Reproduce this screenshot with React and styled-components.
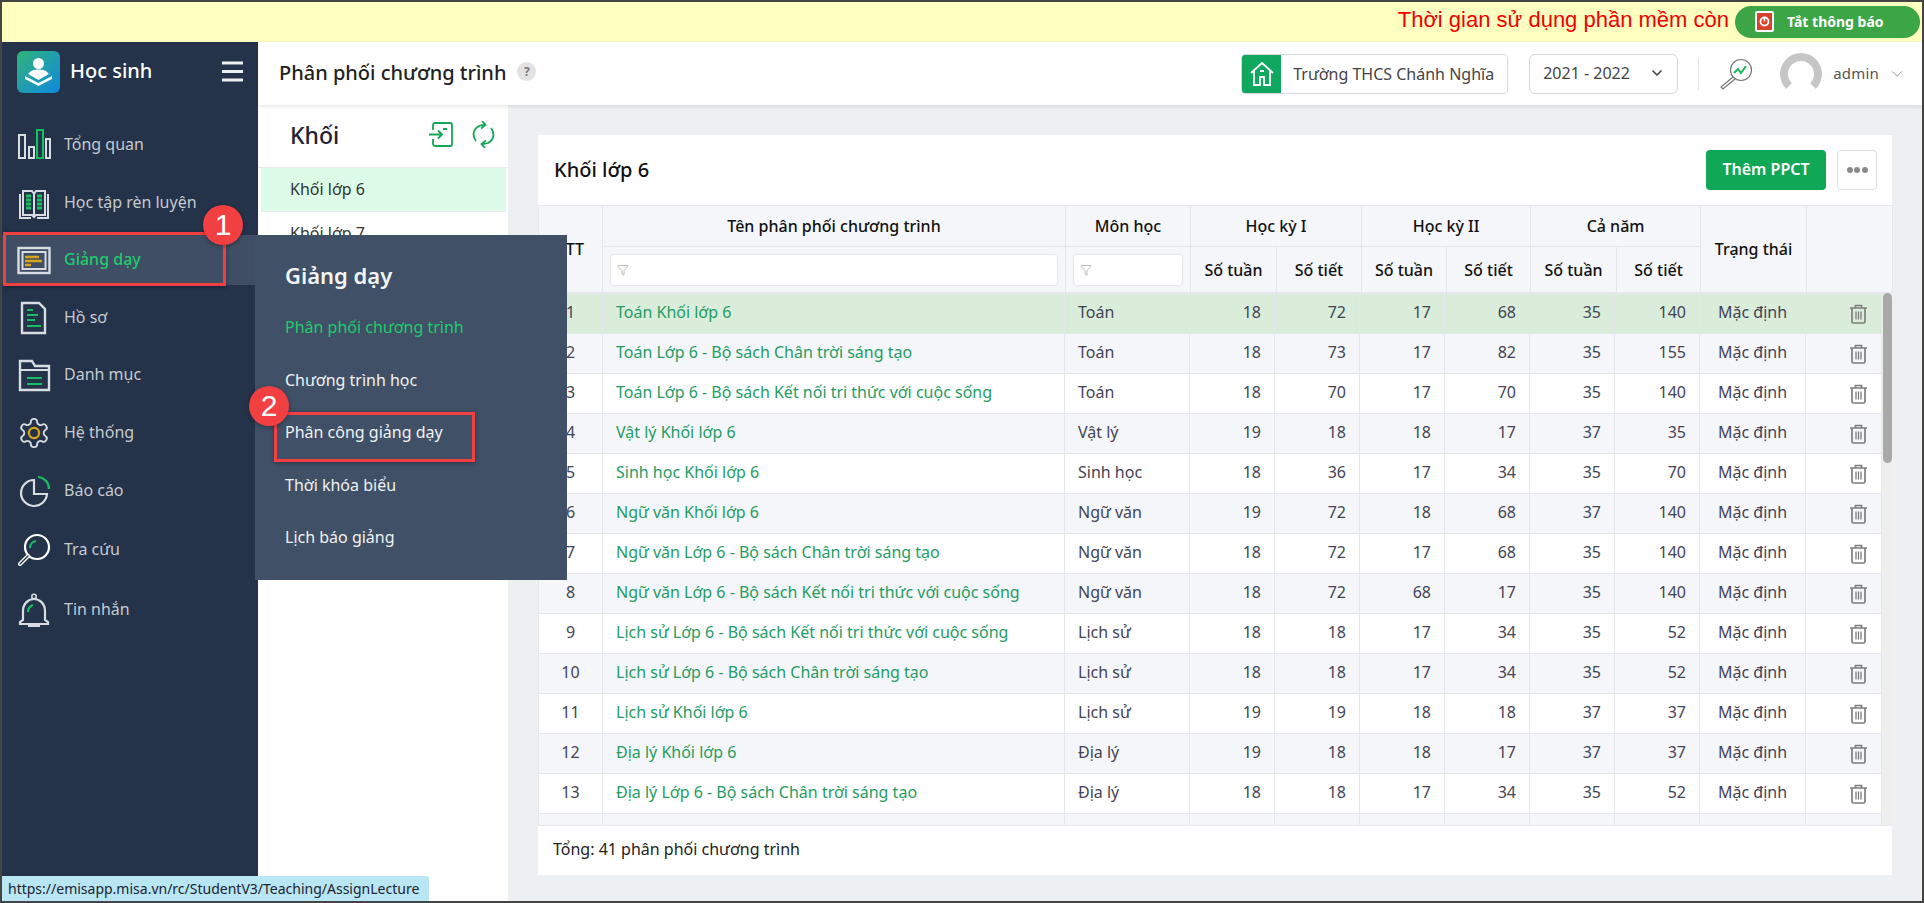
import React from "react";
import styled, { createGlobalStyle } from "styled-components";
import { ChevronDown, Filter } from "lucide-react";

const Global = createGlobalStyle`
  html, body { margin: 0; padding: 0; background: #fff; }
  #root { width: 1924px; height: 903px; }
  * { box-sizing: border-box; }
`;

const Page = styled.div`
  position: relative; width: 1924px; height: 903px; border: 2px solid #444;
  display: flex; flex-direction: column; overflow: hidden;
  font-family: "Noto Sans", "Open Sans", sans-serif; font-size: 16px; color: #333;
`;
const Banner = styled.div`
  height: 40px; flex: none; background: #ffffc0; display: flex; align-items: center; justify-content: flex-end;
  padding: 0 2px 4px 0; gap: 6px;
`;
const BannerText = styled.span`
  font-family: "Liberation Sans", sans-serif; font-size: 22px; color: #f00000; white-space: nowrap;
`;
const MuteButton = styled.div`
  width: 185px; height: 32px; margin-top: 4px; border-radius: 16px; background: #3ca646; color: #fff; font-weight: 700; font-size: 14px;
  display: flex; align-items: center; gap: 13px; padding: 0 0 2px 20px;
`;
const Main = styled.div`flex: 1; min-height: 0; display: flex;`;
const Sidebar = styled.aside`width: 256px; flex: none; background: #243349; display: flex; flex-direction: column;`;
const Brand = styled.div`height: 63px; flex: none; display: flex; align-items: center; padding: 0 15px 3px 15px; margin-bottom: 11px; color: #fff; font-size: 20px; font-weight: 500;`;
const BrandName = styled.span`margin-left: 10px; flex: 1; margin-top: -3px;`;
const BurgerSlot = styled.span`display: flex; margin-bottom: 1px;`;
const Item = styled.div`
  position: relative; height: ${p => p.$h}px; flex: none; display: flex; align-items: center; padding: 0 0 2px 15px;
  margin: ${p => p.$active ? "4px 0" : "0"};
  background: ${p => p.$active ? "#3f4e64" : "transparent"}; color: ${p => p.$active ? "#1fcb6d" : "#c6cad0"};
  font-size: 16px; font-weight: ${p => p.$active ? 500 : 400};
`;
const ItemIcon = styled.span`width: 34px; height: 34px; margin: 2px 13px 0 0; display: flex; align-items: center; justify-content: center;`;
const RedBox = styled.div`
  position: absolute; border: 3px solid #f23f42; box-shadow: 0 1px 4px rgba(0,0,0,.35);
  left: ${p => p.$l}px; top: ${p => p.$t}px; width: ${p => p.$w}px; height: ${p => p.$h}px; pointer-events: none;
`;
const Badge = styled.div`
  position: absolute; left: ${p => p.$l}px; top: ${p => p.$t}px; width: 40px; height: 40px; border-radius: 50%;
  background: #f23f42; color: #fff; font-family: "Liberation Sans", sans-serif; font-size: 30px; font-weight: 400;
  display: flex; align-items: center; justify-content: center; box-shadow: 0 1px 4px rgba(0,0,0,.35); z-index: 3;
`;
const Content = styled.div`flex: 1; min-width: 0; display: flex; flex-direction: column;`;
const Header = styled.header`
  height: 63px; flex: none; background: #fff; display: flex; align-items: center; padding: 0 16px 0 21px;
  box-shadow: 0 1px 4px rgba(0,0,0,.12); position: relative; z-index: 1;
`;
const Title = styled.h1`margin: -2px 0 0; font-size: 20px; font-weight: 500; color: #222;`;
const Help = styled.span`
  width: 19px; height: 19px; border-radius: 50%; background: #e2e2e2; color: #777; font-size: 12px; font-weight: 700;
  display: flex; align-items: center; justify-content: center; margin: -4px auto 0 11px;
`;
const School = styled.div`
  width: 267px; height: 40px; border: 1px solid #d5d8dc; border-radius: 4px; display: flex; align-items: center; overflow: hidden; color: #444; font-size: 16px; white-space: nowrap; padding-bottom: 0;
`;
const SchoolIcon = styled.span`width: 39px; height: 100%; flex: none; background: #10a75f; display: flex; align-items: center; justify-content: center; margin-right: 12px;`;
const Year = styled.div`
  width: 149px; height: 40px; border: 1px solid #d5d8dc; border-radius: 6px; margin-left: 21px; display: flex; align-items: center;
  justify-content: space-between; padding: 0 12px 2px 13px; color: #444; font-size: 16px;
`;
const Divider = styled.span`width: 1px; height: 32px; background: #e3e5e8; margin: 0 20px;`;
const Avatar = styled.span`
  width: 42px; height: 42px; margin-left: 27px; border-radius: 50%; background: #fff; border: 8px solid #c6c6c6;
  border-bottom-color: #fff;
`;
const User = styled.span`margin: -2px 0 0 11px; color: #555; font-size: 15px; letter-spacing: .2px;`;
const Body = styled.div`flex: 1; min-height: 0; display: flex;`;
const Panel = styled.section`width: 250px; flex: none; background: #fff; box-shadow: 1px 0 3px rgba(0,0,0,.06);`;
const PanelHead = styled.div`height: 63px; display: flex; align-items: center; padding: 0 13px 3px 32px; gap: 19px; border-bottom: 1px solid #e8eaed;`;
const PanelTitle = styled.h2`margin: 0 auto 0 0; font-size: 23px; font-weight: 500; color: #223;`;
const PanelRow = styled.div`
  height: 44px; margin: 0 2px 0 3px; display: flex; align-items: center; padding: 0 0 2px 29px; font-size: 16px; color: #333;
  background: ${p => p.$active ? "#dcfce7" : "#fff"}; border-bottom: 1px solid #e8eaed;
`;
const Workspace = styled.main`flex: 1; min-width: 0; background: #ecf0f3; padding: 30px 30px 26px;`;
const Card = styled.div`height: 100%; background: #fff; display: flex; flex-direction: column;`;
const CardHead = styled.div`height: 70px; flex: none; display: flex; align-items: center; padding: 0 15px 0 16px;`;
const CardTitle = styled.h3`margin: -2px auto 0 0; font-size: 20px; font-weight: 500; color: #111;`;
const AddButton = styled.button`
  width: 120px; height: 40px; border: 0; border-radius: 4px; background: #10a756; color: #fff; font: 600 16px "Noto Sans", sans-serif; padding: 0 0 2px;
`;
const MoreButton = styled.button`
  width: 40px; height: 40px; margin-left: 11px; border: 1px solid #dcdfe3; border-radius: 4px; background: #fff;
  display: flex; align-items: center; justify-content: center; gap: 1.5px; padding: 0;
`;
const Dot = styled.i`width: 6px; height: 6px; border-radius: 50%; background: #8a8a8a;`;
const Grid = styled.table`
  width: ${p => p.$w}px; flex: none; table-layout: fixed; border-collapse: collapse;
`;
const Th = styled.th`
  background: #f4f6f9; border: 1px solid #e4e7eb; padding: 0; height: ${p => p.$h}px; font-size: 16px; font-weight: 500; color: #111;
  text-align: center; vertical-align: middle;
`;
const FilterBox = styled.div`
  height: 32px; margin: 0 7px; background: #fff; border: 1px solid #e5e7eb; border-radius: 4px; display: flex; align-items: center; padding-left: 6px; color: #777;
`;
const BodyWrap = styled.div`height: 532px; flex: none; display: flex; overflow: hidden;`;
const Tr = styled.tr`background: ${p => p.$selected ? "#d9edda" : p.$even ? "#f4f6f9" : "#fff"};`;
const Td = styled.td`
  height: 40px; padding: ${p => p.$align === "right" ? "0 13px 3px 0" : p.$align === "left" ? "0 0 3px 13px" : "0 0 3px"};
  border: 1px solid #e4e7eb; text-align: ${p => p.$align || "center"}; color: ${p => p.$link ? "#259c63" : "#445"}; font-size: 16px; white-space: nowrap; overflow: hidden;
`;
const TrashCell = styled.span`display: flex; justify-content: flex-end; padding: 3px 13px 0 0;`;
const Track = styled.div`width: 11px; flex: none; background: #eeeeee;`;
const Thumb = styled.div`height: 170px; border-radius: 5px; background: #a9a9a9; margin: 0 1px;`;
const CardFoot = styled.div`flex: 1; border-top: 1px solid #e4e7eb; display: flex; align-items: center; padding: 0 0 3px 15px; font-size: 16px; color: #222;`;
const Popup = styled.div`
  position: absolute; left: 253px; top: 233px; width: 312px; height: 345px; background: #405066; padding: 16px 0 0 30px; z-index: 2;
`;
const PopupTitle = styled.div`height: 48px; display: flex; align-items: center; font-size: 22px; font-weight: 600; color: #f2f4f6; margin-bottom: 2px;`;
const PopupItem = styled.div`height: 52.5px; display: flex; align-items: center; font-size: 16px; color: ${p => p.$active ? "#1fcb6d" : "#f0f2f4"};`;
const UrlTip = styled.div`
  position: absolute; left: 0; bottom: 0; width: 427px; height: 25px; background: #b8e6f2; color: #223; font-size: 14px;
  display: flex; align-items: center; padding-left: 6px; border-top-right-radius: 3px; z-index: 4; white-space: nowrap;
`;

const W = "#d9dde1", G = "#16c060", Y = "#d9a514";
const Ic = ({ w = 34, h = 34, children, vb }) => <svg width={w} height={h} viewBox={vb || `0 0 ${w} ${h}`} fill="none" strokeWidth="2">{children}</svg>;

const ChartIcon = () => <Ic><g stroke={W}><rect x="2" y="7" width="6" height="23" /><rect x="12" y="19" width="5" height="11" /><rect x="29" y="11" width="4" height="19" /></g><rect x="20" y="2" width="6" height="28" stroke={G} /></Ic>;
const BookIcon = () => <Ic><path d="M6 5h9l2 3 2-3h9v24H19l-2 2-2-2H6z" stroke={W} /><path d="M3 8v24h11M31 8v24H20" stroke={W} /><path d="M17 8v22" stroke={W} /><path d="M9 10h5M9 14h5M9 18h5M9 22h5M20 10h5M20 14h5M20 18h5M20 22h5" stroke={G} strokeWidth="3" /></Ic>;
const ScreenIcon = () => <Ic><rect x="1.5" y="5" width="31" height="25" stroke={W} strokeWidth="2.4" /><rect x="5.5" y="9" width="23" height="17" stroke={W} /><path d="M8 14h14M8 18h17M8 22h6" stroke={Y} strokeWidth="2.4" /></Ic>;
const DocIcon = () => <Ic><path d="M5 2h17l6 6v24H5z" stroke={W} strokeWidth="2.4" /><path d="M10 9h6M10 14h11M10 19h8M10 25h14" stroke={G} strokeWidth="2" /></Ic>;
const FolderIcon = () => <Ic><path d="M3 3h12l3 5h14v24H3z" stroke={W} strokeWidth="2.4" /><path d="M3 12h29" stroke={W} /><path d="M10 20h15M10 26h15" stroke={G} strokeWidth="2" /></Ic>;
const GearIcon = () => <svg width="34" height="34" viewBox="0 0 24 24" fill="none" stroke={W} strokeWidth="1.3"><path d="M12.22 2h-.44a2 2 0 0 0-2 2v.18a2 2 0 0 1-1 1.73l-.43.25a2 2 0 0 1-2 0l-.15-.08a2 2 0 0 0-2.73.73l-.22.38a2 2 0 0 0 .73 2.73l.15.1a2 2 0 0 1 1 1.72v.51a2 2 0 0 1-1 1.74l-.15.09a2 2 0 0 0-.73 2.73l.22.38a2 2 0 0 0 2.73.73l.15-.08a2 2 0 0 1 2 0l.43.25a2 2 0 0 1 1 1.73V20a2 2 0 0 0 2 2h.44a2 2 0 0 0 2-2v-.18a2 2 0 0 1 1-1.73l.43-.25a2 2 0 0 1 2 0l.15.08a2 2 0 0 0 2.73-.73l.22-.39a2 2 0 0 0-.73-2.73l-.15-.08a2 2 0 0 1-1-1.74v-.5a2 2 0 0 1 1-1.74l.15-.09a2 2 0 0 0 .73-2.73l-.22-.38a2 2 0 0 0-2.73-.73l-.15.08a2 2 0 0 1-2 0l-.43-.25a2 2 0 0 1-1-1.73V4a2 2 0 0 0-2-2z" /><circle cx="12" cy="12" r="3.6" stroke={Y} strokeWidth="1.6" /></svg>;
const PieIcon = () => <Ic><path d="M17 6a13 13 0 1 0 13 14H17z" stroke={W} strokeWidth="2.2" /><path d="M21 3a12 12 0 0 1 11 12" stroke={G} strokeWidth="2.2" /></Ic>;
const SearchIcon = () => <Ic><circle cx="20" cy="14" r="12" stroke="#fff" strokeWidth="2.2" /><path d="M13 15a7 7 0 0 1 6-7" stroke={G} strokeWidth="2.2" /><path d="M11 23L3 31" stroke="#fff" strokeWidth="4" strokeLinecap="round" /><path d="M11 23L3 31" stroke="#243349" strokeWidth="1.4" strokeLinecap="round" /></Ic>;
const BellIcon = () => <Ic><path d="M6 27v-9c0-7 5-12 11-12s11 5 11 12v9l3 2v2H3v-2z" stroke={W} strokeWidth="2.2" /><circle cx="17" cy="3.5" r="2.2" stroke={W} strokeWidth="1.6" /><path d="M12 31v2h10v-2" stroke={W} /><path d="M11 19c0-4 2-6 5-7" stroke={G} strokeWidth="2.2" /></Ic>;

const Logo = () => (
  <svg width="43" height="42" viewBox="0 0 43 42">
    <defs><linearGradient id="lg" x1="0" y1="0" x2="1" y2="1"><stop offset="0" stopColor="#31b37a" /><stop offset="1" stopColor="#0f88e0" /></linearGradient></defs>
    <rect width="43" height="42" rx="6" fill="url(#lg)" />
    <circle cx="21.5" cy="12.5" r="5.5" fill="#fff" />
    <path d="M11 23c3-4 7-4.500 10.500-4.500S29 19 32 23l-10.500 6z" fill="#fff" />
    <path d="M8 25l13.500 7L35 25v3l-13.500 7L8 28z" fill="#fff" opacity=".95" />
  </svg>
);
const Burger = () => <svg width="21" height="21" viewBox="0 0 21 21"><path d="M0 2h21M0 10.500h21M0 19h21" stroke="#eef0f2" strokeWidth="3" /></svg>;
const Power = () => <svg width="19" height="21" viewBox="0 0 19 21"><rect width="19" height="21" rx="2" fill="#fff" /><rect x="2" y="2" width="15" height="17" fill="#d8402c" /><circle cx="9.500" cy="10.500" r="4" fill="none" stroke="#fff" strokeWidth="1.8" /><path d="M9.500 6.500v4" stroke="#fff" strokeWidth="1.500" /></svg>;
const HouseIcon = () => <svg width="26" height="26" viewBox="0 0 26 26" fill="none" stroke="#fff" strokeWidth="1.8"><path d="M2 12L13 2l11 10M5 10v14h6v-8h4v8h6V10" /><path d="M11 10h4" /></svg>;
const Lens = () => <svg width="34" height="32" viewBox="0 0 34 32" fill="none"><circle cx="22" cy="12" r="10.500" stroke="#777" strokeWidth="1.200" /><path d="M15 15l4-4 3 4 5-7" stroke="#20b45e" strokeWidth="2" /><path d="M14 19L2 29l2 2 12-10" stroke="#777" strokeWidth="1.200" /></svg>;
const LoginIcon = () => <svg width="25" height="25" viewBox="0 0 25 25" fill="none" stroke="#10a756" strokeWidth="1.800"><path d="M5 8V3a2 2 0 0 1 2-2h15a2 2 0 0 1 2 2v19a2 2 0 0 1-2 2H7a2 2 0 0 1-2-2v-5" /><path d="M1 12.500h13M10 8.500l4 4-4 4M15 7h4" /></svg>;
const SyncIcon = () => <svg width="23" height="27" viewBox="0 0 23 27" fill="none" stroke="#10a756" strokeWidth="1.800"><path d="M4 20C0 15 1 8 7 5c3-1 5-1 6-1" /><path d="M10 0l3.500 4L9 7.500" /><path d="M19 7c4 5 3 12-3 15-3 1-5 1-6 1" /><path d="M13 27l-3.500-4 4.500-3.500" /></svg>;
const Trash = () => <svg width="19" height="20" viewBox="0 0 19 20" fill="none" stroke="#7e7e7e" strokeWidth="1.700"><path d="M1 4h17M6.500 4V1.500h6V4" /><path d="M3 4v13.500a1.500 1.500 0 0 0 1.500 1.500h10a1.500 1.500 0 0 0 1.500-1.500V4" /><path d="M7 7.500v8M9.500 7.500v8M12 7.500v8" strokeWidth="1.300" /></svg>;

const menu = [
  ["Tổng quan", ChartIcon, 58],
  ["Học tập rèn luyện", BookIcon, 57],
  ["Giảng dạy", ScreenIcon, 50],
  ["Hồ sơ", DocIcon, 57],
  ["Danh mục", FolderIcon, 58],
  ["Hệ thống", GearIcon, 57],
  ["Báo cáo", PieIcon, 59],
  ["Tra cứu", SearchIcon, 60],
  ["Tin nhắn", BellIcon, 60],
];

const rows = [
  ["Toán Khối lớp 6", "Toán", 18, 72, 17, 68, 35, 140],
  ["Toán Lớp 6 - Bộ sách Chân trời sáng tạo", "Toán", 18, 73, 17, 82, 35, 155],
  ["Toán Lớp 6 - Bộ sách Kết nối tri thức với cuộc sống", "Toán", 18, 70, 17, 70, 35, 140],
  ["Vật lý Khối lớp 6", "Vật lý", 19, 18, 18, 17, 37, 35],
  ["Sinh học Khối lớp 6", "Sinh học", 18, 36, 17, 34, 35, 70],
  ["Ngữ văn Khối lớp 6", "Ngữ văn", 19, 72, 18, 68, 37, 140],
  ["Ngữ văn Lớp 6 - Bộ sách Chân trời sáng tạo", "Ngữ văn", 18, 72, 17, 68, 35, 140],
  ["Ngữ văn Lớp 6 - Bộ sách Kết nối tri thức với cuộc sống", "Ngữ văn", 18, 72, 68, 17, 35, 140],
  ["Lịch sử Lớp 6 - Bộ sách Kết nối tri thức với cuộc sống", "Lịch sử", 18, 18, 17, 34, 35, 52],
  ["Lịch sử Lớp 6 - Bộ sách Chân trời sáng tạo", "Lịch sử", 18, 18, 17, 34, 35, 52],
  ["Lịch sử Khối lớp 6", "Lịch sử", 19, 19, 18, 18, 37, 37],
  ["Địa lý Khối lớp 6", "Địa lý", 19, 18, 18, 17, 37, 37],
  ["Địa lý Lớp 6 - Bộ sách Chân trời sáng tạo", "Địa lý", 18, 18, 17, 34, 35, 52],
];

const headCols = [64, 463, 125, 86, 85, 85, 84, 86, 84, 106, 86];
const bodyCols = [64, 462, 125, 85, 85, 85, 85, 85, 85, 106, 76];
const Cols = ({ list }) => <colgroup>{list.map((w, i) => <col key={i} style={{ width: w }} />)}</colgroup>;

export default function App() {
  return (
    <Page>
      <Global />
      <Banner>
        <BannerText>Thời gian sử dụng phần mềm còn</BannerText>
        <MuteButton><Power />Tắt thông báo</MuteButton>
      </Banner>
      <Main>
        <Sidebar>
          <Brand><Logo /><BrandName>Học sinh</BrandName><BurgerSlot><Burger /></BurgerSlot></Brand>
          {menu.map(([label, Icon, h]) => (
            <Item key={label} $h={h} $active={label === "Giảng dạy"}>
              <ItemIcon><Icon /></ItemIcon>{label}
              {label === "Giảng dạy" && <RedBox $l={1} $t={-3} $w={223} $h={54} />}
              {label === "Giảng dạy" && <Badge $l={201} $t={-30}>1</Badge>}
            </Item>
          ))}
        </Sidebar>
        <Content>
          <Header>
            <Title>Phân phối chương trình</Title>
            <Help>?</Help>
            <School><SchoolIcon><HouseIcon /></SchoolIcon>Trường THCS Chánh Nghĩa</School>
            <Year>2021 - 2022<ChevronDown size={16} strokeWidth={2.5} color="#445" /></Year>
            <Divider />
            <Lens />
            <Avatar />
            <User>admin</User>
            <ChevronDown size={18} strokeWidth={1.2} color="#888" style={{ marginLeft: 9 }} />
          </Header>
          <Body>
            <Panel>
              <PanelHead><PanelTitle>Khối</PanelTitle><LoginIcon /><SyncIcon /></PanelHead>
              <PanelRow $active>Khối lớp 6</PanelRow>
              <PanelRow>Khối lớp 7</PanelRow>
            </Panel>
            <Workspace>
              <Card>
                <CardHead>
                  <CardTitle>Khối lớp 6</CardTitle>
                  <AddButton>Thêm PPCT</AddButton>
                  <MoreButton><Dot /><Dot /><Dot /></MoreButton>
                </CardHead>
                <Grid $w={1354}>
                  <Cols list={headCols} />
                  <thead>
                    <tr>
                      <Th rowSpan={2}>STT</Th>
                      <Th $h={41}>Tên phân phối chương trình</Th>
                      <Th>Môn học</Th>
                      <Th colSpan={2}>Học kỳ I</Th>
                      <Th colSpan={2}>Học kỳ II</Th>
                      <Th colSpan={2}>Cả năm</Th>
                      <Th rowSpan={2}>Trạng thái</Th>
                      <Th rowSpan={2} />
                    </tr>
                    <tr>
                      <Th $h={46}><FilterBox><Filter size={12} strokeWidth={1} /></FilterBox></Th>
                      <Th><FilterBox><Filter size={12} strokeWidth={1} /></FilterBox></Th>
                      <Th>Số tuần</Th><Th>Số tiết</Th><Th>Số tuần</Th><Th>Số tiết</Th><Th>Số tuần</Th><Th>Số tiết</Th>
                    </tr>
                  </thead>
                </Grid>
                <BodyWrap>
                  <div>
                    <Grid $w={1343}>
                      <Cols list={bodyCols} />
                      <tbody>
                        {rows.map((r, i) => (
                          <Tr key={i} $selected={i === 0} $even={i % 2 === 1}>
                            <Td>{i + 1}</Td>
                            <Td $align="left" $link>{r[0]}</Td>
                            <Td $align="left">{r[1]}</Td>
                            {r.slice(2).map((n, j) => <Td key={j} $align="right">{n}</Td>)}
                            <Td>Mặc định</Td>
                            <Td><TrashCell><Trash /></TrashCell></Td>
                          </Tr>
                        ))}
                        <Tr $even>
                          {bodyCols.map((_, i) => <Td key={i} />)}
                        </Tr>
                      </tbody>
                    </Grid>
                  </div>
                  <Track><Thumb /></Track>
                </BodyWrap>
                <CardFoot>Tổng: 41 phân phối chương trình</CardFoot>
              </Card>
            </Workspace>
          </Body>
        </Content>
      </Main>
      <Popup>
        <PopupTitle>Giảng dạy</PopupTitle>
        <PopupItem $active>Phân phối chương trình</PopupItem>
        <PopupItem>Chương trình học</PopupItem>
        <PopupItem>Phân công giảng dạy</PopupItem>
        <PopupItem>Thời khóa biểu</PopupItem>
        <PopupItem>Lịch báo giảng</PopupItem>
        <RedBox $l={19} $t={177} $w={201} $h={50} />
        <Badge $l={-6} $t={151}>2</Badge>
      </Popup>
      <UrlTip>https://emisapp.misa.vn/rc/StudentV3/Teaching/AssignLecture</UrlTip>
    </Page>
  );
}
